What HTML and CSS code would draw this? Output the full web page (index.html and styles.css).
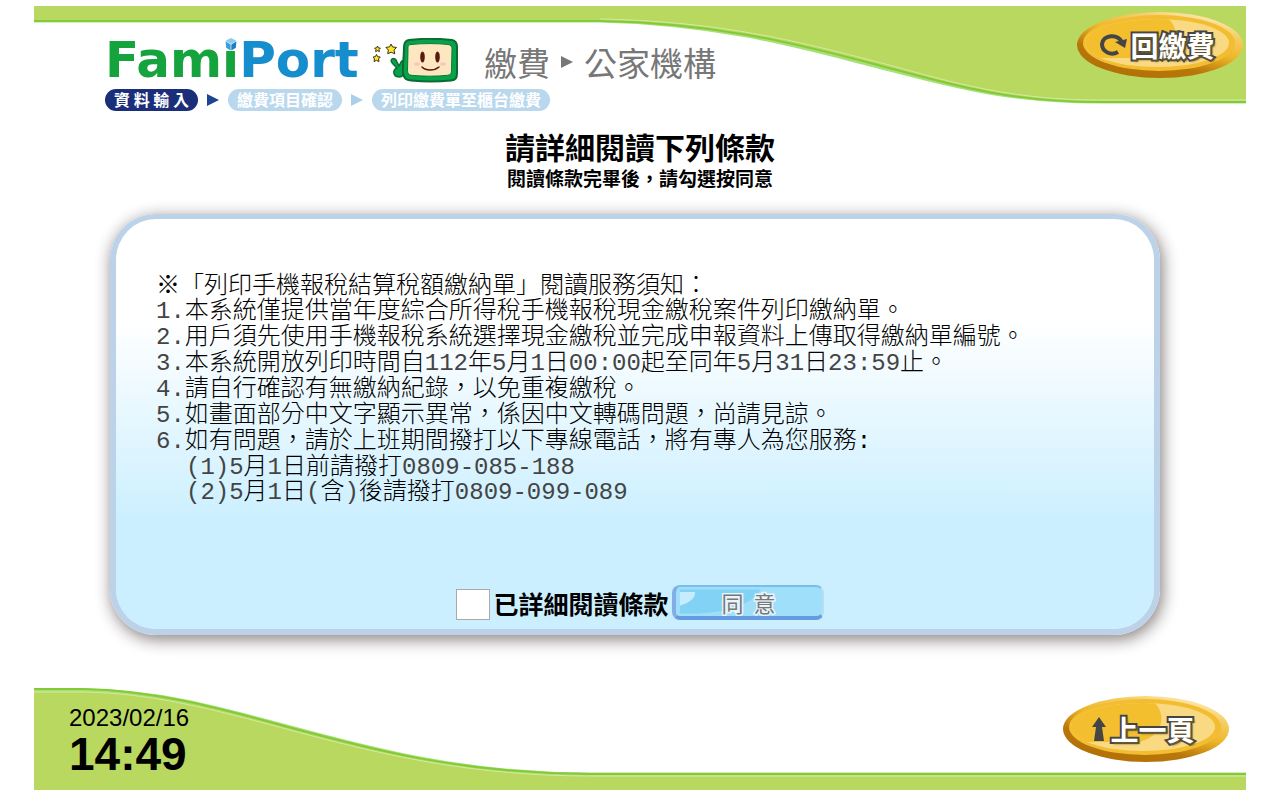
FILE: index.html
```html
<!DOCTYPE html>
<html lang="zh-Hant">
<head>
<meta charset="utf-8">
<title>FamiPort 繳費</title>
<link rel="stylesheet" href="styles.css">
</head>
<body>
<div class="stage">
  <header class="top">
    <svg class="wave wave-top" viewBox="34 6 1212 98" preserveAspectRatio="none" aria-hidden="true">
      <path fill="#b8d860" d="M34 6H1246V103H1100C1000 102 940 82 870 64S720 24 600 21H34Z"/>
      <path fill="none" stroke="#a8e078" stroke-width="3" d="M34 21H600C720 24 800 47 870 65S1000 102 1100 102H1246"/>
      <path fill="none" stroke="#84ca38" stroke-width="2" d="M34 21H600C720 23 800 45 870 63S1000 102 1100 102H1246"/>
      <path fill="none" stroke="#d4eaa0" stroke-width="1" d="M600 19C720 21 800 42 870 60S1000 100 1100 100H1246"/>
    </svg>
    <div class="brand-column">
      <div class="brand-row">
        <div class="logo">
          <span class="fami">Fami</span><span class="port">Port</span>
          <svg class="cube" viewBox="0 0 12 12" aria-hidden="true">
            <path fill="#8accf0" d="M6 0L11 2.500 6 5.500 1 2.500Z"/>
            <path fill="#3d9fd9" d="M1 3L5.700 6V11.500L1.500 9Z"/>
            <path fill="#1d80c2" d="M11 3L6.300 6V11.500L10.500 9Z"/>
          </svg>
        </div>
        <svg class="mascot" viewBox="374 38 86 45" aria-hidden="true">
          <g fill="#ffe52e" stroke="#3b3208" stroke-width="1">
            <path d="M392 44l1.600 3 3.900 .4-2.500 2.700.8 3.700-3.600-1.600-3.500 1.500.7-3.700-2.500-2.600 3.700-.5Z"/>
            <path d="M378.500 46l.9 1.900 2 .2-1.400 1.500.4 2-1.900-.9-1.900.9.4-2-1.400-1.500 2-.2Z"/>
            <path d="M377.500 54.500l1.200 2.200 2.600.3-1.800 1.900.5 2.600-2.500-1.100-2.500 1.100.5-2.600-1.800-1.900 2.600-.3Z"/>
          </g>
          <g fill="#07a34a" stroke="#0a6b34" stroke-width="1.500">
            <path d="M393 59c2-1 4 0 5 3l2 4 2-4c1-2 4-1 3.500 1L404 68v7c-2 3-8 2.500-9-1.500-.8-3 1-5 3-5.500l-4-4c-2-2-2.500-4-1-5Z"/>
            <path stroke-width="2" d="M410 40C423 38.500 440 38.500 453 40c4 .7 5 3 5 7v26c0 5-1 7-6 7.500-13 1.200-27 1.200-40 0-5-.5-7-2-8-7-.8-5 1-17 1-26 0-4 1-7 5-7.500Z"/>
          </g>
          <path fill="#fde7c0" stroke="#077a38" stroke-width="1" d="M412 44.500c12-1.200 26-1.200 37 0 3 .3 4 2 4 5l-.5 21c0 3-1 4.500-4 4.800-11 1.200-25 1.200-36 0-3-.3-4-2-4-5l.5-21c0-3 0-4.500 3-4.800Z"/>
          <ellipse fill="#5c180c" cx="423.500" cy="57" rx="2.300" ry="5.500"/>
          <ellipse fill="#5c180c" cx="438.500" cy="57" rx="2.300" ry="5.500"/>
          <ellipse fill="#fac6c0" cx="418" cy="64" rx="3" ry="1.800"/>
          <ellipse fill="#fac6c0" cx="444" cy="64" rx="3" ry="1.800"/>
          <path fill="none" stroke="#5c180c" stroke-width="1.500" stroke-linecap="round" d="M423 67c4 4 12 4 17 0"/>
        </svg>
        <div class="crumbs">
          <span>繳費</span>
          <svg class="crumb-arrow" viewBox="0 0 12 12" aria-hidden="true"><path fill="#777" d="M0 0L12 6 0 12Z"/></svg>
          <span>公家機構</span>
        </div>
      </div>
      <ol class="steps">
        <li class="step current">資 料 輸 入</li>
        <li class="sep" aria-hidden="true"><svg viewBox="0 0 12 12"><path fill="#1d4690" d="M0 0L12 6 0 12Z"/></svg></li>
        <li class="step">繳費項目確認</li>
        <li class="sep" aria-hidden="true"><svg viewBox="0 0 12 12"><path fill="#a9cfea" d="M0 0L12 6 0 12Z"/></svg></li>
        <li class="step">列印繳費單至櫃台繳費</li>
      </ol>
    </div>
    <button class="oval" type="button">
      <svg class="oval-art" viewBox="0 0 166 66" preserveAspectRatio="none" aria-hidden="true">
        <defs>
          <linearGradient id="rim" x1="0.2" y1="1" x2="0.8" y2="0">
            <stop offset="0" stop-color="#b06f06"/><stop offset="0.300" stop-color="#b9770a"/>
            <stop offset="0.550" stop-color="#eeb62a"/><stop offset="0.800" stop-color="#f6cf68"/><stop offset="1" stop-color="#fff0c4"/>
          </linearGradient>
          <clipPath id="face"><ellipse cx="80" cy="31" rx="72" ry="24"/></clipPath>
        </defs>
        <ellipse cx="83" cy="33" rx="83" ry="33" fill="url(#rim)"/>
        <ellipse cx="82" cy="31" rx="76" ry="28" fill="#f2bd30"/>
        <g clip-path="url(#face)">
          <rect width="166" height="66" fill="#f9da82"/>
          <path fill="#f3bf2f" d="M0 0H82C104 10 106 38 76 46H0Z"/>
        </g>
      </svg>
      <span class="oval-content">
        <svg class="icon-return" viewBox="0 0 28 24" aria-hidden="true">
          <path fill="none" stroke="#454545" stroke-width="4" d="M19 19C12 23 3 19 3 11 4 2 18 0 23 9"/>
          <path fill="#454545" d="M16 9L28 6 26 15Z"/>
        </svg>
        <span class="oval-text">回繳費</span>
      </span>
    </button>
  </header>

  <main class="content">
    <h1>請詳細閱讀下列條款</h1>
    <p class="subtitle">閱讀條款完畢後，請勾選按同意</p>
    <form class="panel">
      <div class="terms">
        <p class="terms-title">※「列印手機報稅結算稅額繳納單」閱讀服務須知：</p>
        <p><span class="num">1.</span>本系統僅提供當年度綜合所得稅手機報稅現金繳稅案件列印繳納單。</p>
        <p><span class="num">2.</span>用戶須先使用手機報稅系統選擇現金繳稅並完成申報資料上傳取得繳納單編號。</p>
        <p><span class="num">3.</span>本系統開放列印時間自<span class="num">112</span>年<span class="num">5</span>月<span class="num">1</span>日<span class="num">00:00</span>起至同年<span class="num">5</span>月<span class="num">31</span>日<span class="num">23:59</span>止。</p>
        <p><span class="num">4.</span>請自行確認有無繳納紀錄，以免重複繳稅。</p>
        <p><span class="num">5.</span>如畫面部分中文字顯示異常，係因中文轉碼問題，尚請見諒。</p>
        <p><span class="num">6.</span>如有問題，請於上班期間撥打以下專線電話，將有專人為您服務:</p>
        <p class="phone"><span class="num">(1)5</span>月<span class="num">1</span>日前請撥打<span class="num">0809-085-188</span></p>
        <p class="phone"><span class="num">(2)5</span>月<span class="num">1</span>日<span class="num">(</span>含<span class="num">)</span>後請撥打<span class="num">0809-099-089</span></p>
      </div>
      <div class="consent">
        <input id="agree" type="checkbox">
        <label for="agree">已詳細閱讀條款</label>
        <button class="agree-button" type="button">
          <svg class="gloss" viewBox="0 0 152 34" preserveAspectRatio="none" aria-hidden="true">
            <path fill="#82d2f5" d="M4 3H88C80 20 55 29 24 31H4Z"/>
            <path fill="#c5edfd" d="M4 6H20C20 14 13 19 4 22Z"/>
          </svg>
          <span class="agree-text">同&nbsp; 意</span>
        </button>
      </div>
    </form>
  </main>

  <footer class="bottom">
    <svg class="wave wave-bottom" viewBox="34 688 1212 102" preserveAspectRatio="none" aria-hidden="true">
      <path fill="#b8d860" d="M34 689H84C240 692 360 774 590 774H1246V790H34Z"/>
      <path fill="none" stroke="#a8e078" stroke-width="3" d="M34 690H84C240 690 360 774 590 774H1246"/>
      <path fill="none" stroke="#84ca38" stroke-width="2" d="M34 689H84C240 692 360 774 590 774H1246"/>
      <path fill="none" stroke="#d4eaa0" stroke-width="1" d="M34 692H84C240 695 360 776 590 776H1246"/>
    </svg>
    <div class="clock">
      <div class="date">2023/02/16</div>
      <div class="time">14:49</div>
    </div>
    <button class="oval" type="button">
      <svg class="oval-art" viewBox="0 0 166 66" preserveAspectRatio="none" aria-hidden="true">
        <ellipse cx="83" cy="33" rx="83" ry="33" fill="url(#rim)"/>
        <ellipse cx="82" cy="31" rx="76" ry="28" fill="#f2bd30"/>
        <g clip-path="url(#face)">
          <rect width="166" height="66" fill="#f9da82"/>
          <path fill="#f3bf2f" d="M0 0H82C104 10 106 38 76 46H0Z"/>
        </g>
      </svg>
      <span class="oval-content">
        <svg class="icon-up" viewBox="0 0 16 24" aria-hidden="true">
          <path fill="#454545" d="M8 0L15 10H11L13 24H3L5 10H1Z"/>
        </svg>
        <span class="oval-text">上一頁</span>
      </span>
    </button>
  </footer>
</div>
</body>
</html>
```

FILE: styles.css
```css
* { box-sizing: border-box; }

body {
  margin: 0;
  background: #fff;
  color: #000;
  font-family: "Liberation Sans", "Noto Sans CJK TC", sans-serif;
}

.stage {
  min-height: 100vh;
  padding: 6px 34px 0;
  display: flex;
  flex-direction: column;
}

h1, p, ol { margin: 0; padding: 0; }

button {
  border: 0;
  padding: 0;
  background: none;
  font-family: "Noto Sans CJK TC", sans-serif;
  cursor: pointer;
}

/* header */
.top {
  position: relative;
  display: flex;
  justify-content: space-between;
  align-items: flex-start;
  padding: 6px 3px 0 71px;
}

.wave {
  position: absolute;
  left: 0;
  top: 0;
  width: 100%;
}
.wave-top { height: 98px; }
.wave-bottom { height: 100%; }

.brand-column {
  position: relative;
  padding-top: 26px;
  display: flex;
  flex-direction: column;
  gap: 7px;
}

.brand-row {
  display: flex;
  align-items: center;
  height: 44px;
}

.logo {
  position: relative;
  width: 268px;
  font: bold 50px/44px "DejaVu Sans", sans-serif;
  display: flex;
}
.fami { color: #14a33c; }
.port { color: #168dcd; }
.cube {
  position: absolute;
  left: 119px;
  top: 0;
  width: 14px;
  height: 13px;
  background: #fff;
}

.mascot { width: 86px; height: 45px; }

.crumbs {
  margin-left: 25px;
  padding-top: 4px;
  display: flex;
  align-items: center;
  gap: 11px;
  color: #777;
  font: 33px/44px "Noto Sans CJK TC", sans-serif;
}
.crumb-arrow { width: 12px; height: 12px; }

.steps {
  list-style: none;
  display: flex;
  align-items: center;
}
.step {
  height: 22px;
  padding: 0 9px;
  border-radius: 11px;
  background: #b9d8ed;
  color: #fff;
  font: bold 16px/21px "Noto Sans CJK TC", sans-serif;
}
.current { background: #1b2e79; }
.sep { display: flex; padding: 0 9px; }
.sep svg { width: 12px; height: 12px; }

/* oval buttons */
.oval {
  position: relative;
  width: 166px;
  height: 66px;
}
.oval-art {
  position: absolute;
  left: 0;
  top: 0;
  width: 100%;
  height: 100%;
}
.oval-content {
  position: relative;
  padding-right: 6px;
  display: flex;
  align-items: center;
  justify-content: center;
  gap: 3px;
}
.oval-text {
  color: #fff;
  font-size: 28px;
  font-weight: bold;
  line-height: 34px;
  -webkit-text-stroke: 4px #454545;
  paint-order: stroke fill;
  text-shadow: 2px 2px 2px #6b5a30;
}
.icon-return { width: 28px; height: 24px; }
.icon-up { width: 16px; height: 24px; }

/* content */
.content {
  flex: 1;
  padding: 17px 86px 0 76px;
  text-align: center;
}
h1 {
  margin-left: 10px;
  font: bold 30px/36px "Noto Sans CJK TC", sans-serif;
}
.subtitle {
  margin-left: 10px;
  font: bold 19px/28px "Noto Sans CJK TC", sans-serif;
}

.panel {
  margin-top: 22px;
  padding: 56px 38px 9px 40px;
  border: 6px solid #bcd2e8;
  border-top-width: 5px;
  border-radius: 46px;
  background: linear-gradient(#fff 25%, #cbefff 74%) padding-box;
  box-shadow: 2px 4px 16px 1px #8f8686;
  text-align: left;
}

.terms {
  font: 24px/26px "Liberation Mono", "Noto Sans CJK TC", monospace;
  font-weight: 300;
  color: #000;
}
.terms .num { color: #444; }
.terms .terms-title { line-height: 24px; }
.terms .phone { padding-left: 30px; line-height: 25px; }

.consent {
  margin-top: 80px;
  padding-left: 8px;
  display: flex;
  align-items: center;
  justify-content: center;
  gap: 3px;
}
.consent input {
  appearance: none;
  width: 34px;
  height: 31px;
  margin: 3px 0 0;
  border: 1px solid #aaa;
  background: #fff;
}
.consent label {
  font: bold 25px/34px "Noto Sans CJK TC", sans-serif;
}
.agree-button {
  position: relative;
  width: 152px;
  height: 35px;
  border: 2px solid #79bde9;
  border-left: 4px solid #82aee5;
  border-right-color: #b5def4;
  border-bottom: 4px solid #659be0;
  border-radius: 8px;
  background: #9fdff9;
}
.gloss {
  position: absolute;
  left: 0;
  top: 0;
  width: 100%;
  height: 100%;
}
.agree-text {
  position: relative;
  color: #777;
  font-size: 22px;
  line-height: 28px;
  -webkit-text-stroke: 3px #e8f5fb;
  paint-order: stroke fill;
}

/* footer */
.bottom {
  position: relative;
  height: 102px;
  padding: 8px 17px 0 35px;
  display: flex;
  justify-content: space-between;
  align-items: flex-start;
}
.clock { position: relative; padding-top: 9px; }
.date { font-size: 24px; line-height: 26px; }
.time { font-size: 46px; font-weight: bold; line-height: 46px; }
```
